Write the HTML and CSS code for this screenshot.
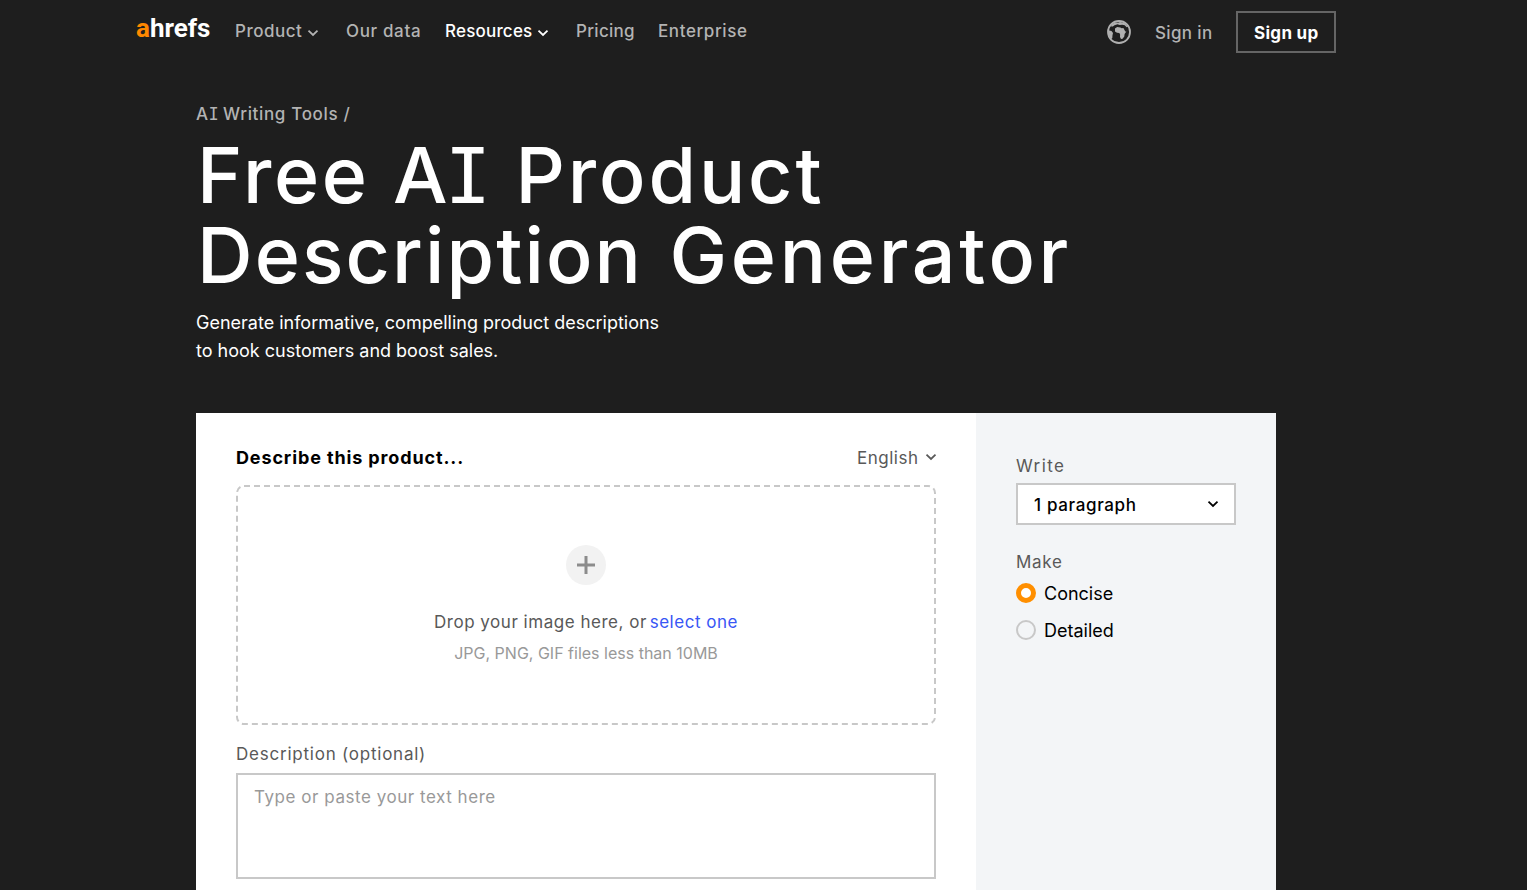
FILE: index.html
```
<!DOCTYPE html>
<html lang="en">
<head>
<meta charset="utf-8">
<title>Free AI Product Description Generator</title>
<link rel="stylesheet" href="styles.css">
</head>
<body>
<header class="header">
  <a class="logo"><span class="logo-a">a</span>hrefs</a>
  <nav class="nav">
    <a class="nav-item nav-product"><span>Product</span><svg class="chev" viewBox="0 0 12 8"><path d="M1.500 1.700l4.500 4.300 4.500-4.300"/></svg></a>
    <a class="nav-item nav-data"><span>Our data</span></a>
    <a class="nav-item nav-resources"><span>Resources</span><svg class="chev" viewBox="0 0 12 8"><path d="M1.500 1.700l4.500 4.300 4.500-4.300"/></svg></a>
    <a class="nav-item nav-pricing"><span>Pricing</span></a>
    <a class="nav-item nav-enterprise"><span>Enterprise</span></a>
  </nav>
  <div class="account">
    <svg class="globe" viewBox="0 0 24 24"><circle cx="12" cy="12" r="11"/><path d="M1.400 10.200L4.500 11l1.500 2-.5 2.300L5.300 18l-1 1.100C2.200 17 1.100 13.800 1.400 10.200zM4.200 4.800L8 2.400l3 .4 2-.9 5 1.400 2.900 3.500-1.200.4-2-2-2.500-.4-2.500.3-2.200-.8-3 .9-1.700 1.300-1.600.1zM8 8.600l2.200-1.700 3.100.5 1.400.8 1.700-.1 1.900 3.400h1.100l-1.800 2.600-.3 2.300-1.700 2.400-1.600.1-1-2 .1-2.500-.8-1.500-2.300-.1L8 11.500z"/></svg>
    <a class="signin">Sign in</a>
    <a class="signup"><span>Sign up</span></a>
  </div>
</header>
<main class="main">
  <div class="crumb">A<span class="slab">I</span> Writing Tools /</div>
  <h1 class="title"><span class="word-free">Free</span> <span class="word-ai">A<span class="slab">I</span></span> <span class="word-product">Product</span><br><span class="word-description">Description</span> <span class="word-generator">Generator</span></h1>
  <p class="lead">Generate informative, compelling product descriptions<br>to hook customers and boost sales.</p>
  <section class="tool">
    <div class="editor">
      <div class="editor-head">
        <h2 class="prompt">Describe this product...</h2>
        <div class="language"><span>English</span><svg class="chev" viewBox="0 0 12 8"><path d="M1.500 1.700l4.500 4.300 4.500-4.300"/></svg></div>
      </div>
      <div class="drop">
        <svg class="frame" viewBox="0 0 700 240"><rect x="1" y="1" width="698" height="238" rx="7"/></svg>
        <svg class="plus" viewBox="0 0 40 40"><circle cx="20" cy="20" r="20"/><path d="M20 11v18M11 20h18"/></svg>
        <div class="drop-text"><span class="drop-main">Drop your image here, or</span><a class="select-one">select one</a></div>
        <div class="drop-note">JPG, PNG, GIF files less than 10MB</div>
      </div>
      <label class="desc-label">Description (optional)</label>
      <div class="textarea"><span>Type or paste your text here</span></div>
    </div>
    <aside class="options">
      <div class="label label-write">Write</div>
      <div class="select"><span>1 paragraph</span><svg class="chev" viewBox="0 0 12 8"><path d="M1.500 1.700l4.500 4.300 4.500-4.300"/></svg></div>
      <div class="label label-make">Make</div>
      <div class="radio"><i class="dot dot-on"></i><span class="concise">Concise</span></div>
      <div class="radio"><i class="dot"></i><span class="detailed">Detailed</span></div>
    </aside>
  </section>
</main>
</body>
</html>
```
FILE: styles.css
```
* { box-sizing: border-box; }
body { margin: 0; height: 890px; overflow: hidden; background: #1e1e1e; color: #fff; font-family: Inter, "Liberation Sans", sans-serif; font-size: 17px; font-weight: 500; line-height: 28px; white-space: nowrap; }
svg { display: block; flex: none; }
.slab { font-family: "DejaVu Sans Mono", monospace; line-height: 1; letter-spacing: -0.04em; margin-left: -0.02em; }
.chev { width: 12px; height: 8px; fill: none; stroke: currentColor; stroke-width: 1.8; }
.header { display: flex; width: 1200px; height: 64px; margin-left: 136px; }
.logo { width: 99px; padding-top: 14px; font-family: Roboto, sans-serif; font-size: 26px; font-weight: 700; }
.logo-a { color: #ff8800; }
.nav { display: flex; height: 45px; padding-top: 17px; color: #b3b3b3; }
.nav-item { display: flex; }
.nav-item .chev { margin: 12px 0 0 5px; }
.nav-product { width: 111px; letter-spacing: 0.5px; }
.nav-data { width: 99px; letter-spacing: 0.65px; }
.nav-resources { width: 131px; color: #fff; letter-spacing: 0.2px; }
.nav-pricing { width: 82px; letter-spacing: 0.3px; }
.nav-enterprise { letter-spacing: 0.6px; }
.account { display: flex; margin-left: auto; }
.globe { width: 24px; height: 24px; margin: 20px 24px 0 0; fill: #b0b0b0; }
.globe circle { fill: none; stroke: #b0b0b0; stroke-width: 1.8; }
.signin { width: 81px; padding-top: 19px; color: #b3b3b3; letter-spacing: 0.35px; }
.signup { width: 100px; height: 42px; margin-top: 11px; padding: 6px 0 0 16px; border: 2px solid #656565; font-weight: 700; line-height: 28px; letter-spacing: 0.3px; }
.main { width: 1080px; margin-left: 196px; padding-top: 36px; }
.crumb { height: 28px; color: #b3b3b3; letter-spacing: 0.65px; }
.title { height: 160px; margin: 7px 0 0; padding-left: 1px; font-size: 77px; line-height: 80px; font-weight: 500; }
.word-free { letter-spacing: 2.6px; }
.word-ai { margin-left: 3px; letter-spacing: -1.500px; }
.word-product { margin-left: 7px; letter-spacing: 2.9px; }
.word-description { letter-spacing: 2.1px; }
.word-generator { margin-left: 6px; letter-spacing: 3.7px; }
.lead { margin: 14px 0 48px; font-size: 18px; font-weight: 400; }
.tool { display: flex; height: 477px; color: #595959; }
.editor { width: 780px; padding: 30px 40px 0; background: #fff; }
.editor-head { display: flex; justify-content: space-between; height: 42px; }
.prompt { margin: 0; color: #000; font-size: 18px; line-height: 29px; font-weight: 700; letter-spacing: 0.87px; }
.language { display: flex; width: 80px; font-weight: 400; justify-content: space-between; padding: 1px 0 0 1px; letter-spacing: 0.5px; }
.language .chev { margin: 9px -1px 0 0; }
.drop { display: grid; justify-items: center; align-content: start; height: 240px; padding-top: 60px; position: relative; }
.frame { position: absolute; inset: 0; width: 700px; height: 240px; fill: none; stroke: #c8c8c8; stroke-width: 2; stroke-dasharray: 6 4; }
.plus { width: 40px; height: 40px; margin-bottom: 23px; fill: #f2f2f2; }
.plus path { stroke: #8c8c8c; stroke-width: 3; }
.drop-text { display: flex; width: 304px; justify-content: space-between; font-weight: 400; letter-spacing: 0.52px; }
.select-one { color: #3856f5; }
.drop-note { margin-top: 3px; color: #999; font-size: 16px; line-height: 28px; font-weight: 400; }
.desc-label { display: block; margin-top: 15px; line-height: 28px; font-weight: 400; letter-spacing: 0.77px; }
.textarea { height: 106px; margin-top: 5px; padding: 8px 16px; border: 2px solid #c8c8c8; color: #999; font-weight: 400; letter-spacing: 0.54px; }
.options { width: 300px; padding: 39px 40px 0; background: #f3f5f7; }
.label { font-weight: 400; }
.label-write { letter-spacing: 1.4px; }
.label-make { margin-bottom: -1px; letter-spacing: 0.7px; }
.select { display: flex; justify-content: space-between; height: 42px; margin: 3px 0 23px; padding: 6px 15px 0 16px; border: 2px solid #c8c8c8; background: #fff; color: #000; letter-spacing: 0.65px; }
.select .chev { margin-top: 9px; }
.radio { display: flex; gap: 8px; align-items: center; height: 37px; color: #000; font-size: 18px; font-weight: 400; }
.dot { width: 20px; height: 20px; margin-bottom: 2px; border: 2px solid #c8c8c8; border-radius: 50%; }
.dot-on { border: 5px solid #ff8f00; background: #fff; }
```
